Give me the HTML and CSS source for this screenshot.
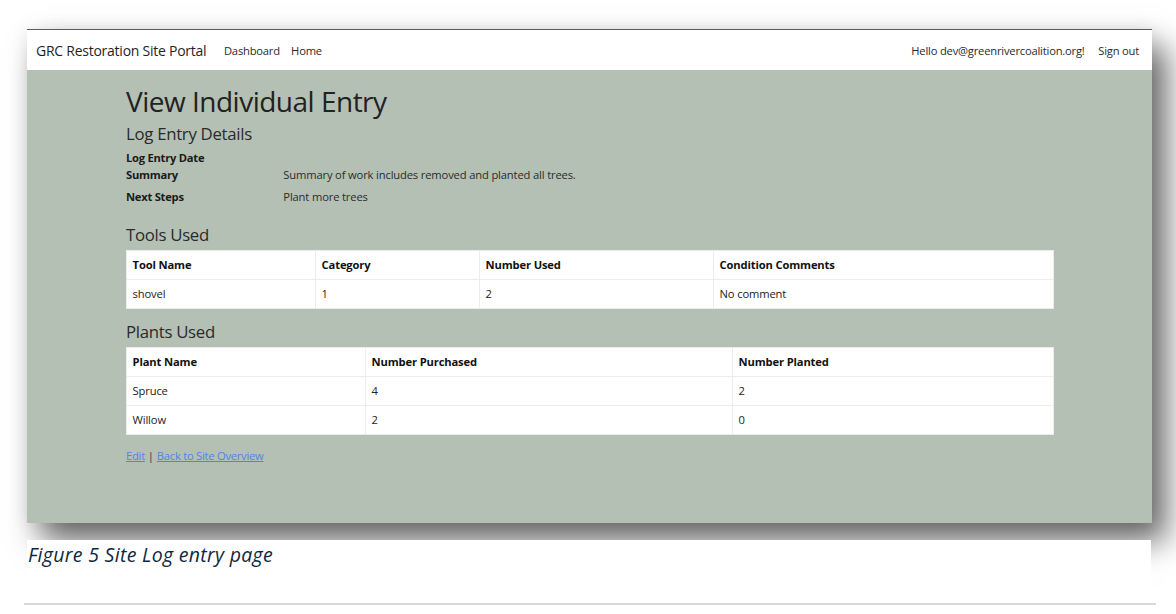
FILE: index.html
```html
<!DOCTYPE html>
<html lang="en">
<head>
<meta charset="utf-8">
<title>Site Log entry page</title>
<link rel="stylesheet" href="styles.css">
</head>
<body>
<div class="page">
  <div class="figure">
    <div class="shot">
      <nav class="navbar">
        <div class="nav-left">
          <a class="brand" href="#">GRC Restoration Site Portal</a>
          <a class="nav-link" href="#">Dashboard</a>
          <a class="nav-link" href="#">Home</a>
        </div>
        <div class="nav-right">
          <span class="nav-link">Hello dev@greenrivercoalition.org!</span>
          <a class="nav-link signout" href="#">Sign out</a>
        </div>
      </nav>
      <main class="container">
        <h1 class="title">View Individual Entry</h1>
        <h4 class="section">Log Entry Details</h4>
        <dl class="details">
          <dt>Log Entry Date</dt>
          <dd></dd>
          <dt>Summary</dt>
          <dd>Summary of work includes removed and planted all trees.</dd>
          <dt>Next Steps</dt>
          <dd>Plant more trees</dd>
        </dl>
        <h4 class="section">Tools Used</h4>
        <table class="grid tools">
          <colgroup>
            <col class="t1"><col class="t2"><col class="t3"><col class="t4">
          </colgroup>
          <thead>
            <tr><th>Tool Name</th><th>Category</th><th>Number Used</th><th>Condition Comments</th></tr>
          </thead>
          <tbody>
            <tr><td>shovel</td><td>1</td><td>2</td><td>No comment</td></tr>
          </tbody>
        </table>
        <h4 class="section">Plants Used</h4>
        <table class="grid plants">
          <colgroup>
            <col class="p1"><col class="p2"><col class="p3">
          </colgroup>
          <thead>
            <tr><th>Plant Name</th><th>Number Purchased</th><th>Number Planted</th></tr>
          </thead>
          <tbody>
            <tr><td>Spruce</td><td>4</td><td>2</td></tr>
            <tr><td>Willow</td><td>2</td><td>0</td></tr>
          </tbody>
        </table>
        <p class="links"><a href="#">Edit</a> | <a href="#">Back to Site Overview</a></p>
      </main>
    </div>
    <p class="caption">Figure 5 Site Log entry page</p>
  </div>
  <div class="rule"></div>
</div>
</body>
</html>
```

FILE: styles.css
```css
html, body {
  margin: 0;
  padding: 0;
  background: #ffffff;
}

body {
  font-family: "Open Sans", "Noto Sans", sans-serif;
  color: #212529;
  overflow: hidden;
}

.page {
  width: 1176px;
  height: 614px;
  padding-top: 29px;
  box-sizing: border-box;
}

.figure {
  display: flex;
  flex-direction: column;
}

.shot {
  position: relative;
  z-index: 0;
  margin-left: 27px;
  width: 1125px;
  height: 494px;
  box-sizing: border-box;
  border-top: 1px solid #5c5c5c;
  background: #b5c0b4;
  box-shadow: 14px 18px 30px rgba(0, 0, 0, 0.6), 0 0 18px rgba(0, 0, 0, 0.07);
  display: flex;
  flex-direction: column;
}

/* navbar */
.navbar {
  height: 40px;
  flex: none;
  background: #ffffff;
  display: flex;
  align-items: center;
  justify-content: space-between;
  padding: 0 13px 0 9px;
  box-sizing: border-box;
}

.nav-left,
.nav-right {
  display: flex;
  align-items: center;
}

.brand {
  font-size: 14px;
  color: #1f1f1f;
  text-decoration: none;
  letter-spacing: -0.25px;
  margin-right: 12px;
}

.nav-link {
  font-size: 11.2px;
  color: #2a2a2a;
  text-decoration: none;
  padding: 0 5.6px;
  letter-spacing: -0.2px;
}

.nav-right .signout {
  padding-left: 8px;
  padding-right: 0;
}

/* content */
.container {
  width: 927px;
  margin: 0 auto;
  padding-top: 15px;
  font-size: 11.2px;
  line-height: 16.8px;
}

.title {
  margin: 0 0 5.6px;
  font-size: 28px;
  line-height: 33.6px;
  font-weight: 400;
  letter-spacing: -0.5px;
  color: #222;
}

.section {
  margin: 0 0 5.6px;
  font-size: 16.8px;
  line-height: 20.2px;
  font-weight: 400;
  letter-spacing: -0.3px;
  color: #2a2a2a;
}

.details {
  display: grid;
  grid-template-columns: 157.3px 1fr;
  margin: 0 0 13px;
}

.details dt {
  font-weight: 700;
  letter-spacing: -0.25px;
  color: #1a1a1a;
}

.details dd {
  margin: 0 0 5.6px;
  letter-spacing: -0.15px;
  color: #2b2b2b;
}

.grid {
  width: 927px;
  table-layout: fixed;
  border-collapse: collapse;
  background: #ffffff;
  border: 1px solid #e6e6e6;
}

.grid.tools {
  margin: 0 0 12.2px;
}

.grid.plants {
  margin: 0 0 12.5px;
}

.grid th,
.grid td {
  padding: 5.6px 5.6px;
  line-height: 16.8px;
  text-align: left;
  border: 1px solid #ececec;
  font-size: 11.2px;
  letter-spacing: -0.15px;
}

.grid th {
  font-weight: 700;
  color: #111;
}

.grid td {
  color: #222;
}

.t1 { width: 189px; }
.t2 { width: 164px; }
.t3 { width: 234px; }
.t4 { width: 340px; }

.p1 { width: 239px; }
.p2 { width: 367px; }
.p3 { width: 321px; }

.links {
  margin: 0;
  color: #3a3a3a;
}

.links a {
  color: #4b86e6;
  text-decoration: underline;
  letter-spacing: -0.25px;
}

/* caption */
.caption {
  position: relative;
  z-index: 1;
  margin: 17px 0 0 27px;
  width: 1124px;
  height: 50px;
  background: #ffffff;
  padding: 3px 0 0 1px;
  box-sizing: border-box;
  font-style: italic;
  font-size: 19.5px;
  line-height: 24px;
  letter-spacing: 0.3px;
  color: #0e2841;
}

.rule {
  margin: 13px 0 0 24px;
  width: 1132px;
  height: 2px;
  background: #d9d9d9;
}
```
